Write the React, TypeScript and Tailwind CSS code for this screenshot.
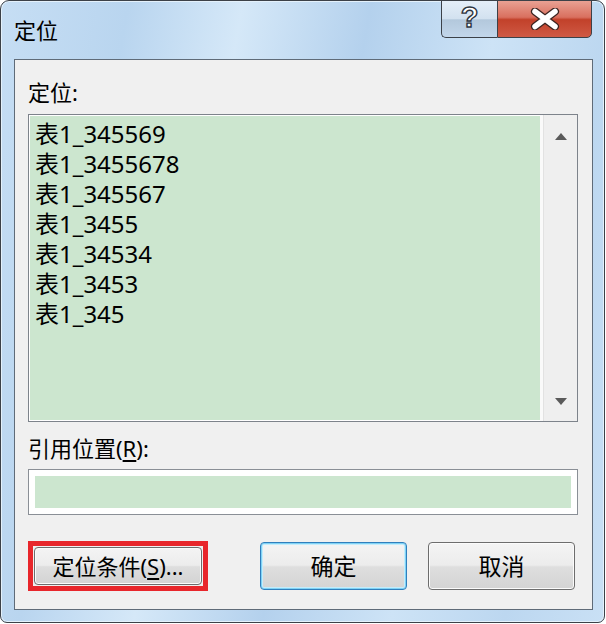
import React from "react";

const font = { fontFamily: '"Noto Sans", "Noto Sans CJK SC", sans-serif' };

function Win7Button({
  children,
  className = "",
  isDefault = false,
}: {
  children: React.ReactNode;
  className?: string;
  isDefault?: boolean;
}) {
  return (
    <div
      className={
        "flex items-center justify-center rounded-[4px] border text-[22px] text-black " +
        (isDefault
          ? "border-[#2f7fbd] shadow-[inset_0_0_0_1px_#7fd2f5,inset_0_0_0_2px_#c5ecfb] "
          : "border-[#6d6d6d] shadow-[inset_0_0_0_1px_#fbfbfb] ") +
        "bg-[linear-gradient(180deg,#f4f4f4_0%,#ececec_48%,#dedede_52%,#d3d3d3_100%)] " +
        className
      }
    >
      {children}
    </div>
  );
}

const items = [
  "表1_345569",
  "表1_3455678",
  "表1_345567",
  "表1_3455",
  "表1_34534",
  "表1_3453",
  "表1_345",
];

export default function App() {
  return (
    <div className="w-[606px] h-[624px] bg-white" style={font}>
      <div className="w-[605px] h-[623px] rounded-t-[9px] rounded-b-[7px] border border-[#3c4148] bg-[linear-gradient(100deg,#c6def4_0%,#b9d5ef_18%,#d5e8f8_34%,#b4d1ed_52%,#cde3f6_70%,#bcd7f0_86%,#c9e0f5_100%)] flex flex-col pb-[12px] shadow-[inset_0_0_0_1px_#e4f1fb]">
        {/* title bar */}
        <div className="h-[58px] flex items-start justify-between pl-[13px] pr-[12px]">
          <div className="mt-[14px] text-[22px] leading-[30px] text-black">定位</div>
          <div className="flex h-[38px] -mt-px">
            <div className="w-[56px] h-full rounded-bl-[5px] border border-[#3c4148] border-r-0 bg-[linear-gradient(180deg,#e4eef8_0%,#d2e1ef_50%,#b3c8dc_52%,#c2d6ea_100%)] flex items-center justify-center">
              <span
                className="text-[29px] font-bold leading-none text-white [-webkit-text-stroke:1.4px_#2d3540] -mt-[3px]"
                style={{ fontFamily: '"Liberation Sans", sans-serif' }}
              >
                ?
              </span>
            </div>
            <div className="w-[95px] h-full rounded-br-[5px] border border-[#3c4148] bg-[linear-gradient(180deg,#e9a193_0%,#d9705f_45%,#c2412a_52%,#cf5a45_100%)] flex items-center justify-center">
              <svg width="32" height="22" viewBox="0 0 32 22">
                <path
                  d="M6 3.5 L26 18.5 M26 3.5 L6 18.5"
                  stroke="#3a2320"
                  strokeWidth="8"
                  strokeLinecap="round"
                />
                <path
                  d="M6 3.5 L26 18.5 M26 3.5 L6 18.5"
                  stroke="#ffffff"
                  strokeWidth="5.5"
                  strokeLinecap="round"
                />
              </svg>
            </div>
          </div>
        </div>

        {/* client panel */}
        <div className="ml-[13px] mr-[11px] flex-1 border border-[#5f6b78] bg-[#f0f0f0] pt-[18px] pl-[13px] pr-[14px] flex flex-col">
          <div className="h-[28px] leading-[28px] text-[22px] text-black">定位:</div>
          <div className="mt-[8px] h-[308px] border border-[#7d838b] flex bg-white">
            <div className="flex-1 bg-[#cce6cf] mt-px ml-px mb-px pt-[3px] pl-[5px]">
              {items.map((t) => (
                <div key={t} className="h-[30px] leading-[30px] text-[24px] text-black">
                  {t}
                </div>
              ))}
            </div>
            <div className="w-[3px] bg-[#fafafa]" />
            <div className="w-[34px] bg-[#efefef] border-l border-[#e2e2e2] flex flex-col items-center justify-between pt-[18px] pb-[16px]">
              <svg width="12" height="7" viewBox="0 0 12 7">
                <path d="M6 0 L12 7 L0 7 Z" fill="#5a5a5a" />
              </svg>
              <svg width="12" height="7" viewBox="0 0 12 7">
                <path d="M0 0 L12 0 L6 7 Z" fill="#5a5a5a" />
              </svg>
            </div>
          </div>

          <div className="mt-[12px] h-[28px] leading-[28px] text-[22px] text-black">
            引用位置(<span className="underline underline-offset-[3px]">R</span>):
          </div>
          <div className="mt-[7px] h-[46px] border border-[#8a8f96] bg-white p-[6px]">
            <div className="h-full bg-[#cce6cf]" />
          </div>

          <div className="mt-[26px] flex items-center">
            <div className="border-[5px] border-[#e8262b] p-px">
              <Win7Button className="w-[168px] h-[38px]">
                <span>
                  定位条件(<span className="underline underline-offset-[3px]">S</span>)...
                </span>
              </Win7Button>
            </div>
            <Win7Button isDefault className="ml-[52px] w-[147px] h-[48px] text-[23px]">
              确定
            </Win7Button>
            <Win7Button className="ml-[21px] w-[147px] h-[48px] text-[23px]">取消</Win7Button>
          </div>
        </div>
      </div>
    </div>
  );
}
